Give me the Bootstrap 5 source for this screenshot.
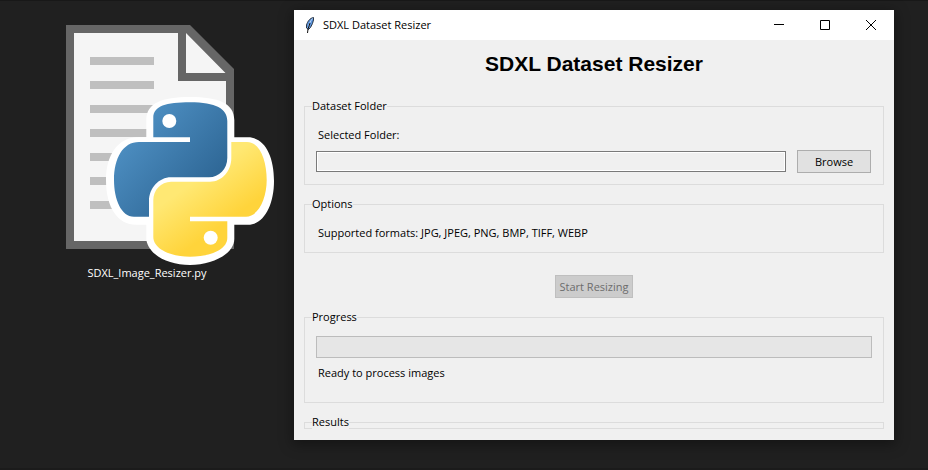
<!DOCTYPE html>
<html lang="en">
<head>
<meta charset="utf-8">
<meta name="viewport" content="width=device-width, initial-scale=1">
<title>SDXL Dataset Resizer</title>
<link href="https://cdn.jsdelivr.net/npm/bootstrap@5.3.0/dist/css/bootstrap.min.css" rel="stylesheet">
<style>
body { background: #202020; font: 11px/16px "Open Sans", "Noto Sans", sans-serif; color: #000; }
.desktop { border-top: 1px solid #181818; border-bottom: 2px solid #1b1b1b; padding: 9px 34px 28px 19px; gap: 19px; }
.file-item { width: 256px; padding-top: 15px; color: #fff; }
.file-item svg { display: block; }
.app-window { background: #f0f0f0; box-shadow: 0 3px 12px 2px rgba(0,0,0,.35); min-width: 0; }
.title-bar { background: #fff; height: 30px; padding-left: 10px; gap: 7px; }
.win-btn { width: 46px; height: 30px; border: 0; background: transparent; padding: 0; }
.win-btn svg { display: block; margin: 0 auto; }
.app-body { padding: 10px 10px 11px; }
.app-title { font: bold 21px/28px "Liberation Sans", Arial, sans-serif; margin: 0 0 20px; padding: 0; }
.group-box { border: 1px solid #dcdcdc; padding: 0 11px; margin-bottom: 11px; }
.group-box legend { float: none; width: auto; font-size: 11px; line-height: 16px; margin: 0 0 -3px -4px; background: #f0f0f0; position: relative; }
.text-line { padding: 0 2px; }
.path-box { height: 21px; border: 1px solid #7a7a7a; background: #f0f0f0; box-shadow: inset 0 0 0 1px #fff; min-width: 0; padding: 0 4px; }
.tk-btn { height: 23px; border: 1px solid #adadad; background: #e1e1e1; color: #000; padding: 0 3px; line-height: 20px; }
.tk-btn:disabled { background: #ccc; border-color: #bfbfbf; color: #6d6d6d; }
.browse-btn { width: 74px; margin-right: 1px; }
.start-btn { min-width: 78px; }
.field-row { margin-top: 7px; gap: 11px; }
.tk-progress { height: 22px; border: 1px solid #bcbcbc; border-radius: 0; background: #e6e6e6; margin-bottom: 7px; }
.folder-group, .options-group { padding-top: 16px; padding-bottom: 11px; }
.progress-group { padding-top: 14px; padding-bottom: 21px; }
.results-group { padding-bottom: 1px; }
.start-row { margin: 22px 0 11px; }
</style>
</head>
<body>
<main class="desktop d-flex align-items-start min-vh-100">
  <figure class="file-item flex-shrink-0 m-0 text-center">
    <svg width="256" height="240" viewBox="19 25 256 240" role="img" aria-label="Python file">
      <defs>
        <linearGradient id="blue" gradientUnits="userSpaceOnUse" x1="105" y1="97" x2="205" y2="185"><stop offset="0" stop-color="#5a9fd4"/><stop offset="1" stop-color="#306998"/></linearGradient>
        <linearGradient id="yellow" gradientUnits="userSpaceOnUse" x1="212" y1="232" x2="182" y2="190"><stop offset="0" stop-color="#ffd43b"/><stop offset="1" stop-color="#ffe873"/></linearGradient>
      </defs>
      <path fill="#666" d="M66 25H190L234 69V249H66Z"/>
      <path fill="#f5f5f5" d="M74 33H178V81H226V241H74ZM186 33L225.500 73H186Z"/>
      <path fill="#bfbfbf" d="M90 57h64v8H90zM90 81h64v8H90zM90 105h64v8H90zM90 129h64v8H90zM90 153h64v8H90zM90 177h64v8H90zM90 201h64v8H90z"/>
      <path fill="#fff" d="M190 97C162 97 146.300 103 146.300 120V137.300H138C118 137.300 106 155 106 180C106 208 118 224.700 136 224.700H146.300V240C149 255 168 265 190 265C212 265 234.300 254 234.300 239V224.700H248C264 224.700 274 205 274 181C274 155 264 137.300 248 137.300H234.300V120C234.300 103 218 97 190 97Z"/>
      <path fill="url(#blue)" d="M153.300 137.300V118C153.300 106 166 102.300 190 102.300C216 102.300 227.300 109 227.300 121V158C227.300 169 219 177.300 209 177.300H171C159 177.300 149 188 149 201V216.700H134C121 216.700 114 199 114 180C114 158 123 142 139 142H190V137.300Z"/>
      <path fill="url(#yellow)" d="M231.300 142H247C260 142 266.700 161 266.700 180C266.700 199 258 216.700 246 216.700H190V221.300H227.300V238C227.300 250 209 256.700 190 256.700C171 256.700 153.300 249 153.300 237V200C153.300 190 161 181.700 171 181.700H210C222 181.700 231.300 171 231.300 158Z"/>
      <circle cx="169.300" cy="121" r="7" fill="#fff"/><circle cx="210.700" cy="237.700" r="7" fill="#fff"/>
    </svg>
    <figcaption>SDXL_Image_Resizer.py</figcaption>
  </figure>

  <section class="app-window flex-grow-1" aria-label="SDXL Dataset Resizer">
    <header class="title-bar d-flex align-items-center">
      <svg width="12" height="18" viewBox="0 0 12 18" aria-hidden="true">
        <path d="M9.500 1.500C6 2 3.500 5.500 2.500 9V12L4.500 13.500L6.500 11.500L8.500 7.500L9.500 4Z" fill="#5b93dc" stroke="#1c2633" stroke-width=".9"/>
        <path d="M8.500 2.500C6.500 5 5 8 4 12" stroke="#b9d4f5" stroke-width="1" fill="none"/>
        <path d="M6 7L4 13L3.500 17" stroke="#111" stroke-width="1" fill="none"/>
      </svg>
      <span class="flex-grow-1">SDXL Dataset Resizer</span>
      <div class="d-flex">
        <button type="button" class="win-btn" aria-label="Minimize"><svg width="10" height="10" viewBox="0 0 10 10"><path d="M0 4.500H10" stroke="#000"/></svg></button>
        <button type="button" class="win-btn" aria-label="Maximize"><svg width="10" height="10" viewBox="0 0 10 10"><path d="M.5 .5H9.500V9.500H.5Z" fill="none" stroke="#000"/></svg></button>
        <button type="button" class="win-btn" aria-label="Close"><svg width="10" height="10" viewBox="0 0 10 10"><path d="M0 0L10 10M10 0L0 10" stroke="#000"/></svg></button>
      </div>
    </header>
    <div class="app-body">
      <h1 class="app-title text-center">SDXL Dataset Resizer</h1>
      <fieldset class="group-box folder-group">
        <legend>Dataset Folder</legend>
        <label class="text-line d-block" for="folder">Selected Folder:</label>
        <div class="field-row d-flex align-items-center">
          <input id="folder" type="text" class="path-box flex-grow-1" readonly>
          <button type="button" class="tk-btn browse-btn">Browse</button>
        </div>
      </fieldset>
      <fieldset class="group-box options-group">
        <legend>Options</legend>
        <div class="text-line">Supported formats: JPG, JPEG, PNG, BMP, TIFF, WEBP</div>
      </fieldset>
      <div class="start-row d-flex justify-content-center">
        <button type="button" class="tk-btn start-btn" disabled>Start Resizing</button>
      </div>
      <fieldset class="group-box progress-group">
        <legend>Progress</legend>
        <div class="progress tk-progress" role="progressbar" aria-label="Progress" aria-valuenow="0" aria-valuemin="0" aria-valuemax="100"></div>
        <div class="text-line">Ready to process images</div>
      </fieldset>
      <fieldset class="group-box results-group mb-0">
        <legend>Results</legend>
      </fieldset>
    </div>
  </section>
</main>
<script src="https://cdn.jsdelivr.net/npm/bootstrap@5.3.0/dist/js/bootstrap.bundle.min.js"></script>
</body>
</html>
